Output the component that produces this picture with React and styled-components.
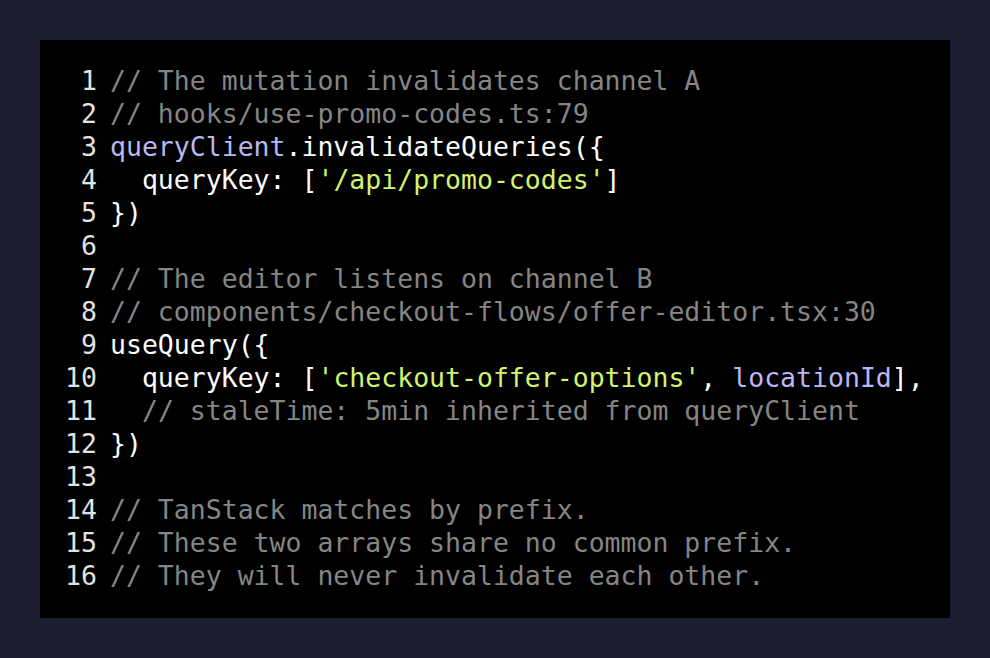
import React from "react";
import styled, { createGlobalStyle } from "styled-components";

const GlobalStyle = createGlobalStyle`
  html, body {
    margin: 0;
    padding: 0;
    background: #1c1d31;
  }
`;

const Page = styled.div`
  width: 990px;
  height: 658px;
  padding: 40px;
  box-sizing: border-box;
`;

const Panel = styled.div`
  background: #000;
  height: 100%;
  box-sizing: border-box;
  padding: 24px 25px;
  font-family: "DejaVu Sans Mono", "Liberation Mono", monospace;
  font-size: 26.5px;
  line-height: 33px;
`;

const Line = styled.div`
  display: flex;
  white-space: pre;
  height: 33px;
`;

const Num = styled.span`
  width: 32px;
  text-align: right;
  color: #e2e2e2;
  margin-right: 13px;
  flex-shrink: 0;
`;

const Code = styled.span`
  color: #ffffff;
`;

const Comment = styled.span`
  color: #858585;
`;

const Str = styled.span`
  color: #d2f46c;
`;

const Ident = styled.span`
  color: #b9b8f2;
`;

const lines = [
  [<Comment>// The mutation invalidates channel A</Comment>],
  [<Comment>// hooks/use-promo-codes.ts:79</Comment>],
  [<Ident>queryClient</Ident>, ".invalidateQueries({"],
  ["  queryKey: [", <Str>'/api/promo-codes'</Str>, "]"],
  ["})"],
  [""],
  [<Comment>// The editor listens on channel B</Comment>],
  [<Comment>// components/checkout-flows/offer-editor.tsx:30</Comment>],
  ["useQuery({"],
  [
    "  queryKey: [",
    <Str>'checkout-offer-options'</Str>,
    ", ",
    <Ident>locationId</Ident>,
    "],",
  ],
  ["  ", <Comment>// staleTime: 5min inherited from queryClient</Comment>],
  ["})"],
  [""],
  [<Comment>// TanStack matches by prefix.</Comment>],
  [<Comment>// These two arrays share no common prefix.</Comment>],
  [<Comment>// They will never invalidate each other.</Comment>],
];

export default function App() {
  return (
    <>
      <GlobalStyle />
      <Page>
        <Panel>
          {lines.map((parts, i) => (
            <Line key={i}>
              <Num>{i + 1}</Num>
              <Code>
                {parts.map((p, j) => (
                  <React.Fragment key={j}>{p}</React.Fragment>
                ))}
              </Code>
            </Line>
          ))}
        </Panel>
      </Page>
    </>
  );
}
